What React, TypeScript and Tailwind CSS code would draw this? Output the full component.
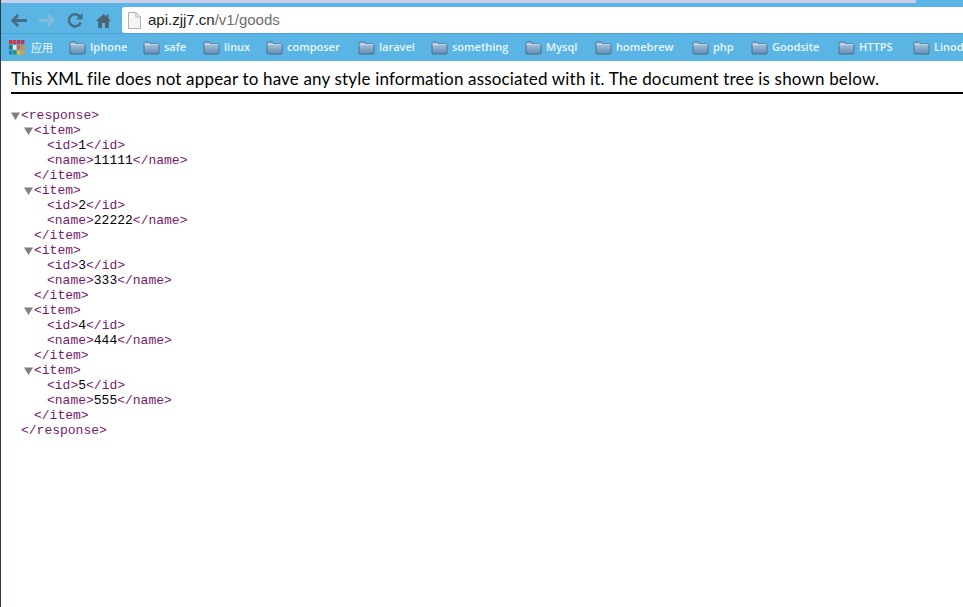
const BOOKMARKS = [
  { label: "Iphone", cell: "w-[74px]" },
  { label: "safe", cell: "w-[60px]" },
  { label: "linux", cell: "w-[63px]" },
  { label: "composer", cell: "w-[92px]" },
  { label: "laravel", cell: "w-[73px]" },
  { label: "something", cell: "w-[94px]" },
  { label: "Mysql", cell: "w-[70px]" },
  { label: "homebrew", cell: "w-[97px]" },
  { label: "php", cell: "w-[59px]" },
  { label: "Goodsite", cell: "w-[87px]" },
  { label: "HTTPS", cell: "w-[75px]" },
  { label: "Linode", cell: "w-[60px]" },
];

const ITEMS = [
  { id: "1", name: "11111" },
  { id: "2", name: "22222" },
  { id: "3", name: "333" },
  { id: "4", name: "444" },
  { id: "5", name: "555" },
];

function FolderIcon() {
  return (
    <svg width="17" height="14" viewBox="0 0 17 14" className="shrink-0">
      <defs>
        <linearGradient id="folder-fill" x1="0" y1="0" x2="0" y2="1">
          <stop offset="0" stopColor="#b4cde2" />
          <stop offset="1" stopColor="#5f8db5" />
        </linearGradient>
      </defs>
      <path
        d="M1 3V2.2C1 1.5 1.5 1 2.2 1H6c.6 0 .9.3 1.2.8L7.8 3H15.5c.3 0 .5.2.5.5V12.5c0 .3-.2.5-.5.5H1.5c-.3 0-.5-.2-.5-.5Z"
        fill="url(#folder-fill)"
        stroke="#4a6a86"
        strokeWidth="0.9"
      />
      <path d="M1.5 3.6H15.5" stroke="#d5e4f0" strokeWidth="0.8" />
    </svg>
  );
}

function AppsIcon() {
  const colors = [
    ["#c8343f", "#c93a4c", "#b83a5a", "#a23f70"],
    ["#1f7d6a", "#dff1f8", "#e05a3a", "#e0883a"],
    ["#2f7fc0", "#2a9a5a", "#e2b63a", "#d8a030"],
  ];
  return (
    <svg width="16" height="15" viewBox="0 0 16 15" className="shrink-0">
      {colors.map((row, y) =>
        row.map((c, x) => <rect key={`${x}-${y}`} x={x * 4} y={y * 5.2} width="3.4" height="4.2" fill={c} />)
      )}
    </svg>
  );
}

function Tag({ children }: { children: string }) {
  return <span className="text-[#751a6e]">{children}</span>;
}

function Caret() {
  return (
    <svg width="9" height="8" viewBox="0 0 9 8" className="shrink-0">
      <path d="M0 .5H9L4.5 8Z" fill="#7f7f7f" />
    </svg>
  );
}

function Line({ indent, caret, children }: { indent: string; caret?: boolean; children: React.ReactNode }) {
  return (
    <div className={`flex h-[15px] items-center whitespace-pre ${indent}`}>
      {caret && (
        <span className="flex w-[10px] justify-start">
          <Caret />
        </span>
      )}
      <span>{children}</span>
    </div>
  );
}

export default function App() {
  return (
    <div className="flex h-[607px] w-[963px] flex-col overflow-hidden border-l border-[#2e3a44] bg-white">
      {/* browser chrome */}
      <div className="h-[61px] shrink-0 bg-[#5bb5e4]">
        <div className="h-[3px] w-[915px] bg-[#c9cfe8]" />
        <div className="flex h-[30px] items-end">
          <div className="flex h-[26px] w-[121px] items-center">
            <svg width="16" height="13" viewBox="0 0 16 13" className="ml-[10px]">
              <path d="M7 1 1.8 6.5 7 12M2.5 6.5H16" fill="none" stroke="#4a6c80" strokeWidth="2.8" />
            </svg>
            <svg width="16" height="13" viewBox="0 0 16 13" className="ml-[12px]">
              <path d="M9 1 14.2 6.5 9 12M13.5 6.5H0" fill="none" stroke="#84bcdc" strokeWidth="2.8" />
            </svg>
            <svg width="16" height="16" viewBox="0 0 16 16" className="ml-[12px]">
              <path d="M13 5A6 6 0 1 0 13.6 10.5" fill="none" stroke="#456e8a" strokeWidth="2.6" />
              <path d="M15.5 1V7.5H9Z" fill="#456e8a" />
            </svg>
            <svg width="15" height="15" viewBox="0 0 15 15" className="ml-[13px]">
              <path d="M7.5 1 0 8H2.2V15H6V10H9V15H12.8V8H15L12.5 5.6V1.5H10.5V3.7Z" fill="#4d6472" />
            </svg>
          </div>
          <div className="flex h-[26px] flex-1 items-center rounded-l-[3px] bg-white pl-[6px]">
            <svg width="13" height="17" viewBox="0 0 13 17" className="shrink-0">
              <path d="M.5.5H8L12.5 5V16.5H.5Z M8 .5V5H12.5" fill="#f6f6f6" stroke="#b0b0b0" />
            </svg>
            <span className="ml-[7px] font-['Liberation_Sans',sans-serif] text-[15px] text-[#222]">
              api.zjj7.cn<span className="text-[#6e6e6e]">/v1/goods</span>
            </span>
          </div>
        </div>
        <div className="flex h-[28px] items-center overflow-hidden border-t border-[#4ba3d2] font-['Open_Sans',sans-serif] text-[11px] font-semibold text-[#e8f5fc]">
          <div className="flex w-[68px] shrink-0 items-center pl-[8px]">
            <AppsIcon />
            <span className="ml-[6px] font-['Noto_Sans_CJK_SC',sans-serif] font-normal">应用</span>
          </div>
          {BOOKMARKS.map((b) => (
            <div key={b.label} className={`flex shrink-0 items-center gap-[4px] ${b.cell}`}>
              <FolderIcon />
              <span>{b.label}</span>
            </div>
          ))}
        </div>
      </div>

      {/* xml notice */}
      <div className="ml-[10px] h-[33px] shrink-0 border-b-2 border-black font-['Lato',sans-serif] text-[17px] leading-[35px] tracking-[0.17px] whitespace-nowrap text-black">
        This XML file does not appear to have any style information associated with it. The document tree is shown below.
      </div>

      {/* xml tree */}
      <div className="mt-[14px] pl-[10px] font-['Liberation_Mono',monospace] text-[13px] leading-[15px] text-black">
        <Line indent="" caret>
          <Tag>{"<response>"}</Tag>
        </Line>
        {ITEMS.map((item) => (
          <div key={item.id}>
            <Line indent="pl-[13px]" caret>
              <Tag>{"<item>"}</Tag>
            </Line>
            <Line indent="pl-[36px]">
              <Tag>{"<id>"}</Tag>
              {item.id}
              <Tag>{"</id>"}</Tag>
            </Line>
            <Line indent="pl-[36px]">
              <Tag>{"<name>"}</Tag>
              {item.name}
              <Tag>{"</name>"}</Tag>
            </Line>
            <Line indent="pl-[23px]">
              <Tag>{"</item>"}</Tag>
            </Line>
          </div>
        ))}
        <Line indent="pl-[10px]">
          <Tag>{"</response>"}</Tag>
        </Line>
      </div>
    </div>
  );
}
